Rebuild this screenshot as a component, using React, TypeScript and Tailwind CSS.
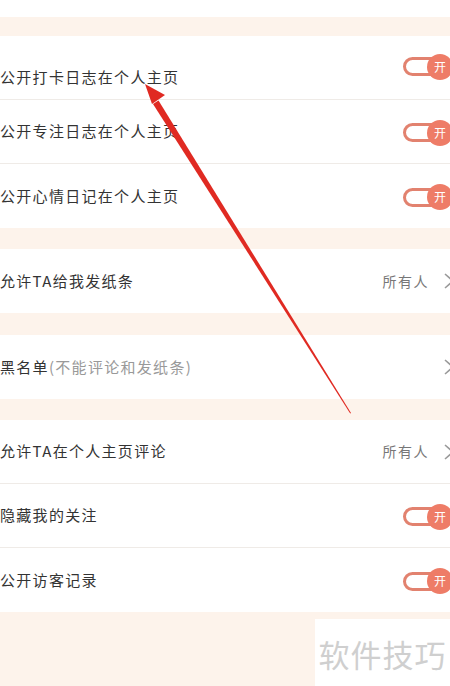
import React from "react";

const font = { fontFamily: '"Noto Sans CJK SC", "Noto Sans", sans-serif' };

const Toggle = () => (
  <div className="relative flex h-[26px] w-[48px] items-center">
    <div className="h-[19px] w-[38px] rounded-full border-[3px] border-[#e2826f] bg-white" />
    <div className="absolute left-[24px] top-0 flex h-[26px] w-[26px] items-center justify-center rounded-full bg-[#ee7c67] text-[12px] text-white">
      开
    </div>
  </div>
);

const Chevron = () => (
  <svg width="12" height="18" viewBox="0 0 12 18" className="shrink-0">
    <path d="M2 2 L10 9 L2 16" fill="none" stroke="#9a9a9a" strokeWidth="1.6" />
  </svg>
);

type RowProps = {
  label: React.ReactNode;
  right: React.ReactNode;
  divider?: boolean;
  shift?: string;
};

const Row = ({ label, right, divider, shift = "" }: RowProps) => (
  <div
    className={`flex h-[64px] items-center justify-between overflow-hidden ${
      divider ? "border-b border-[#efebe7]" : ""
    }`}
  >
    <span className={`text-[15px] tracking-[1.3px] text-[#333] ${shift}`}>{label}</span>
    {right}
  </div>
);

const Value = ({ text }: { text?: string }) => (
  <div className="flex items-center gap-[14px]">
    {text && <span className="text-[14px] tracking-[1.5px] text-[#777]">{text}</span>}
    <div className="-mr-[5px]">
      <Chevron />
    </div>
  </div>
);

const Sw = ({ top }: { top?: boolean }) => (
  <div className={`-mr-[1px] ${top ? "mb-[2px]" : "mt-[2px]"}`}>
    <Toggle />
  </div>
);

export default function App() {
  return (
    <div className="relative h-[686px] w-[450px] overflow-hidden bg-[#fdf3eb]" style={font}>
      <div className="h-[17px] bg-white" />
      <div className="h-[19px]" />
      <div className="bg-white">
        <Row label="公开打卡日志在个人主页" right={<Sw top />} divider shift="mt-[20px]" />
        <Row label="公开专注日志在个人主页" right={<Sw />} divider />
        <Row label="公开心情日记在个人主页" right={<Sw />} />
      </div>
      <div className="h-[21px]" />
      <div className="bg-white">
        <Row label="允许TA给我发纸条" right={<Value text="所有人" />} />
      </div>
      <div className="h-[22px]" />
      <div className="bg-white">
        <Row
          label={
            <>
              黑名单<span className="text-[#999]">(不能评论和发纸条)</span>
            </>
          }
          right={<Value />}
        />
      </div>
      <div className="h-[21px]" />
      <div className="bg-white">
        <Row label="允许TA在个人主页评论" right={<Value text="所有人" />} divider />
        <Row label="隐藏我的关注" right={<Sw />} divider />
        <Row label="公开访客记录" right={<Sw />} />
      </div>
      <div className="flex justify-end pt-[7px]">
        <div className="flex h-[71px] w-[135px] items-center justify-center bg-white">
          <span className="text-[31px] tracking-[1px] text-[#cfcfcf]">软件技巧</span>
        </div>
      </div>
      <svg
        className="pointer-events-none absolute left-0 top-0"
        width="450"
        height="686"
        viewBox="0 0 450 686"
      >
        <polygon points="351,413 350.2,413.4 153,104 158.5,100.5" fill="#e02a22" />
        <polygon points="145,84 165,95 152,104" fill="#e02a22" />
      </svg>
    </div>
  );
}
